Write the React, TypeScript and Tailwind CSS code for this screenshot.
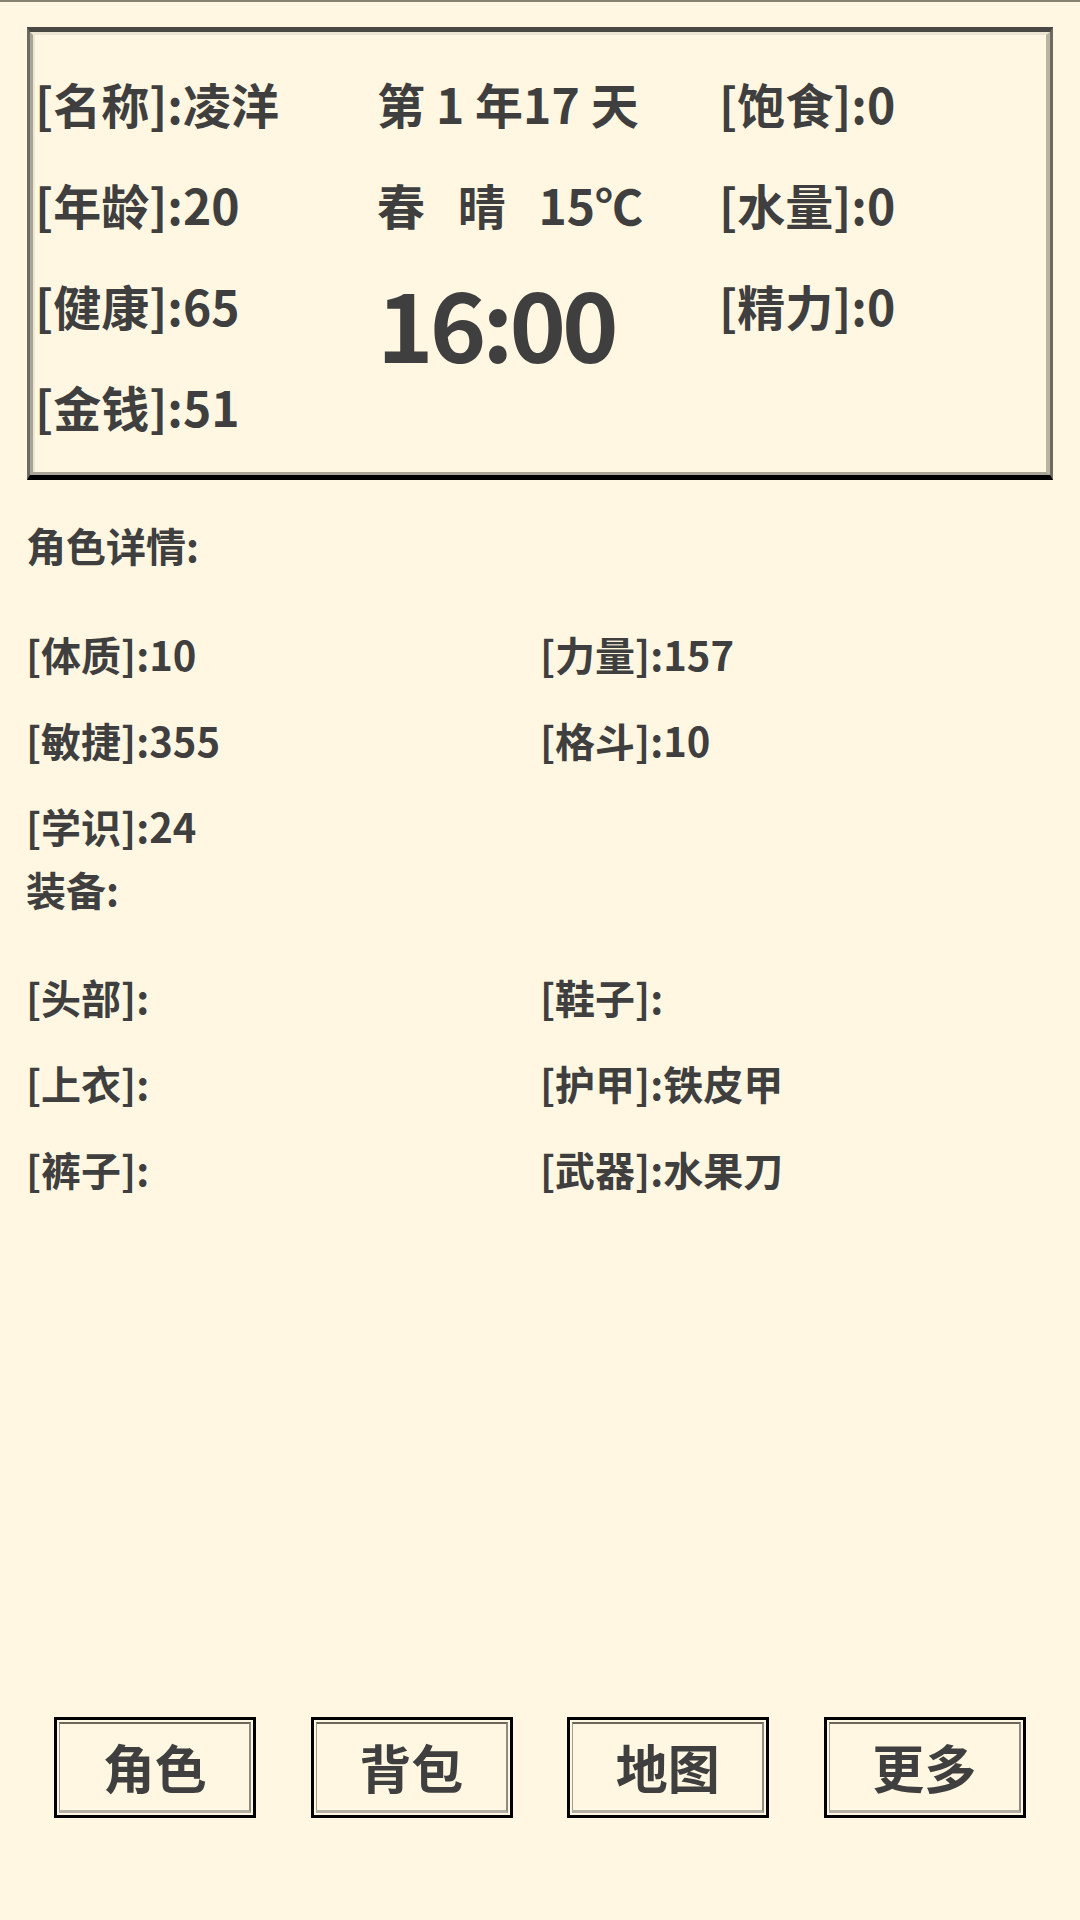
const font = { fontFamily: '"Noto Sans CJK SC", "Noto Sans", sans-serif' };

function PanelCell({ text }: { text: string }) {
  return <div className="h-[101px] flex items-center whitespace-pre">{text}</div>;
}

function StatRow({ left, right }: { left: string; right?: string }) {
  return (
    <div className="grid grid-cols-2 h-[86px] items-center">
      <div>{left}</div>
      <div>{right ?? ""}</div>
    </div>
  );
}

function NavButton({ label }: { label: string }) {
  return (
    <div className="w-[202px] h-[101px] border-[3px] border-black p-[2px] bg-[#fff7e1]">
      <div className="h-full border-t-2 border-t-[#6b675d] border-l border-l-[#a19d90] border-r-2 border-r-[#8f8b80] border-b-[3px] border-b-[#b4b1a4] flex items-center justify-center text-[52px] font-bold leading-none">
        {label}
      </div>
    </div>
  );
}

export default function App() {
  return (
    <div className="w-[1080px] h-[1920px] bg-[#fff7e1] text-[#3f3f3f] flex flex-col" style={font}>
      {/* top rule */}
      <div className="h-[2px] bg-[#858170]" />

      {/* status panel */}
      <div className="mx-[27px] mt-[25px] border-t-[5px] border-t-[#4a4844] border-l-[3px] border-l-[#6e6a60] border-r-[3px] border-r-[#6e6a60] border-b-[5px] border-b-black">
        <div className="border-t-[3px] border-t-[#ebe5d1] border-l-[3px] border-l-[#a8a496] border-r-[4px] border-r-[#b8b4a4] border-b-[3px] border-b-[#a8a496]">
          <div className="grid grid-cols-[342px_342px_1fr] pt-[17px] pb-[16px] text-[48px] font-bold leading-none border-l-2 border-l-[#ebe5d1]">
            <div>
              <PanelCell text="[名称]:凌洋" />
              <PanelCell text="[年龄]:20" />
              <PanelCell text="[健康]:65" />
              <PanelCell text="[金钱]:51" />
            </div>
            <div>
              <PanelCell text="第 1 年17 天" />
              <PanelCell text="春   晴   15℃" />
              <div className="h-[136px] flex items-center text-[96px] tracking-[-4px]">16:00</div>
            </div>
            <div>
              <PanelCell text="[饱食]:0" />
              <PanelCell text="[水量]:0" />
              <PanelCell text="[精力]:0" />
            </div>
          </div>
        </div>
      </div>

      {/* character details */}
      <div className="px-[26px] text-[40px] font-bold leading-none">
        <div className="mt-[45px] h-[40px] flex items-center">角色详情:</div>
        <div className="mt-[46px]">
          <StatRow left="[体质]:10" right="[力量]:157" />
          <StatRow left="[敏捷]:355" right="[格斗]:10" />
          <StatRow left="[学识]:24" />
        </div>
        <div className="h-[40px] flex items-center">装备:</div>
        <div className="mt-[45px]">
          <StatRow left="[头部]:" right="[鞋子]:" />
          <StatRow left="[上衣]:" right="[护甲]:铁皮甲" />
          <StatRow left="[裤子]:" right="[武器]:水果刀" />
        </div>
      </div>

      {/* bottom nav */}
      <div className="mt-auto mb-[102px] mx-[27px] grid grid-cols-4 justify-items-center">
        <NavButton label="角色" />
        <NavButton label="背包" />
        <NavButton label="地图" />
        <NavButton label="更多" />
      </div>
    </div>
  );
}
